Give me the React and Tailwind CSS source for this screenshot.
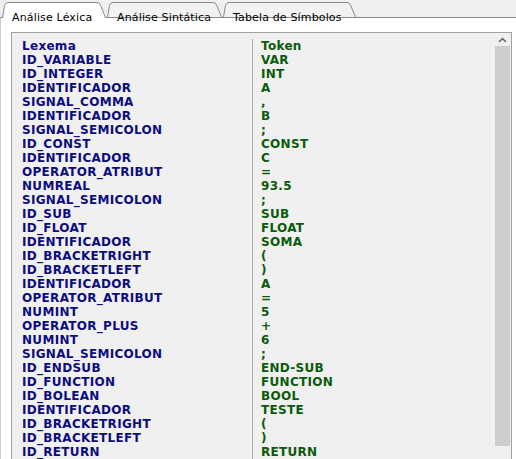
import React from 'react';

const rows = [
  ['ID_VARIABLE', 'VAR'],
  ['ID_INTEGER', 'INT'],
  ['IDENTIFICADOR', 'A'],
  ['SIGNAL_COMMA', ','],
  ['IDENTIFICADOR', 'B'],
  ['SIGNAL_SEMICOLON', ';'],
  ['ID_CONST', 'CONST'],
  ['IDENTIFICADOR', 'C'],
  ['OPERATOR_ATRIBUT', '='],
  ['NUMREAL', '93.5'],
  ['SIGNAL_SEMICOLON', ';'],
  ['ID_SUB', 'SUB'],
  ['ID_FLOAT', 'FLOAT'],
  ['IDENTIFICADOR', 'SOMA'],
  ['ID_BRACKETRIGHT', '('],
  ['ID_BRACKETLEFT', ')'],
  ['IDENTIFICADOR', 'A'],
  ['OPERATOR_ATRIBUT', '='],
  ['NUMINT', '5'],
  ['OPERATOR_PLUS', '+'],
  ['NUMINT', '6'],
  ['SIGNAL_SEMICOLON', ';'],
  ['ID_ENDSUB', 'END-SUB'],
  ['ID_FUNCTION', 'FUNCTION'],
  ['ID_BOLEAN', 'BOOL'],
  ['IDENTIFICADOR', 'TESTE'],
  ['ID_BRACKETRIGHT', '('],
  ['ID_BRACKETLEFT', ')'],
  ['ID_RETURN', 'RETURN'],
];

// tab outline: slanted left edge, rounded top, slanted right edge
function Tab({ label, width, active }) {
  const h = active ? 16 : 15;
  const w = width;
  const outline = `M0.5 ${h} L2.5 3.5 Q3.2 0.5 6 0.5 L${w - 10} 0.5 Q${w - 7} 0.5 ${w - 6.3} 3.5 L${w - 1.5} ${h}`;
  return (
    <div
      className={`relative shrink-0 pl-[10px] pt-[2px] ${active ? 'h-[16px] -mb-px z-10' : 'h-[15px]'}`}
      style={{ width: w }}
    >
      <svg className="absolute inset-0" width={w} height={h} viewBox={`0 0 ${w} ${h}`}>
        <path d={`${outline} Z`} fill={active ? '#ffffff' : '#f2f2f2'} stroke="none" />
        <path d={outline} fill="none" stroke="#8a8a8a" strokeWidth="1" />
      </svg>
      <span className="relative text-[11px] leading-[14px] tracking-[0.15px] text-black whitespace-nowrap">{label}</span>
    </div>
  );
}

export default function App() {
  return (
    <div className="w-[516px] h-[459px] overflow-hidden bg-[#f0f0f0] flex flex-col font-['DejaVu_Sans',Verdana,sans-serif]">
      <div className="h-[18px] shrink-0 flex items-end pl-[2px] border-b border-[#8a8a8a]">
        <Tab label="Análise Léxica" width={105} active />
        <Tab label="Análise Sintática" width={116} />
        <Tab label="Tabela de Símbolos" width={134} />
      </div>

      <div className="flex-1 min-h-0 bg-white border-l border-[#cfcfcf] pl-[10px] pr-[4px] pt-[14px]">
        <div className="h-full flex border border-[#a0a0a0] border-b-0 bg-[#f0f0f0]">
          <div className="flex-1 flex pl-[10px] pt-[6px] text-[12px] leading-[14px] tracking-[0.3px] font-bold">
            <div className="w-[230px] text-[#0c0c80]">
              <div>Lexema</div>
              {rows.map(([lex], i) => (
                <div key={i} className="whitespace-nowrap">{lex}</div>
              ))}
            </div>
            <div className="flex-1 border-l border-[#a8a8a8] pl-[8px] text-[#0a5a0a]">
              <div>Token</div>
              {rows.map(([, tok], i) => (
                <div key={i} className="whitespace-nowrap">{tok}</div>
              ))}
            </div>
          </div>

          <div className="w-[17px] shrink-0 flex flex-col">
            <div className="h-[13px] flex items-center justify-center">
              <svg width="9" height="6" viewBox="0 0 9 6">
                <path d="M1 5 L4.5 1.5 L8 5" fill="none" stroke="#606060" strokeWidth="1.5" />
              </svg>
            </div>
            <div className="h-[400px] mx-[1px] bg-[#cdcdcd]" />
          </div>
        </div>
      </div>
    </div>
  );
}
